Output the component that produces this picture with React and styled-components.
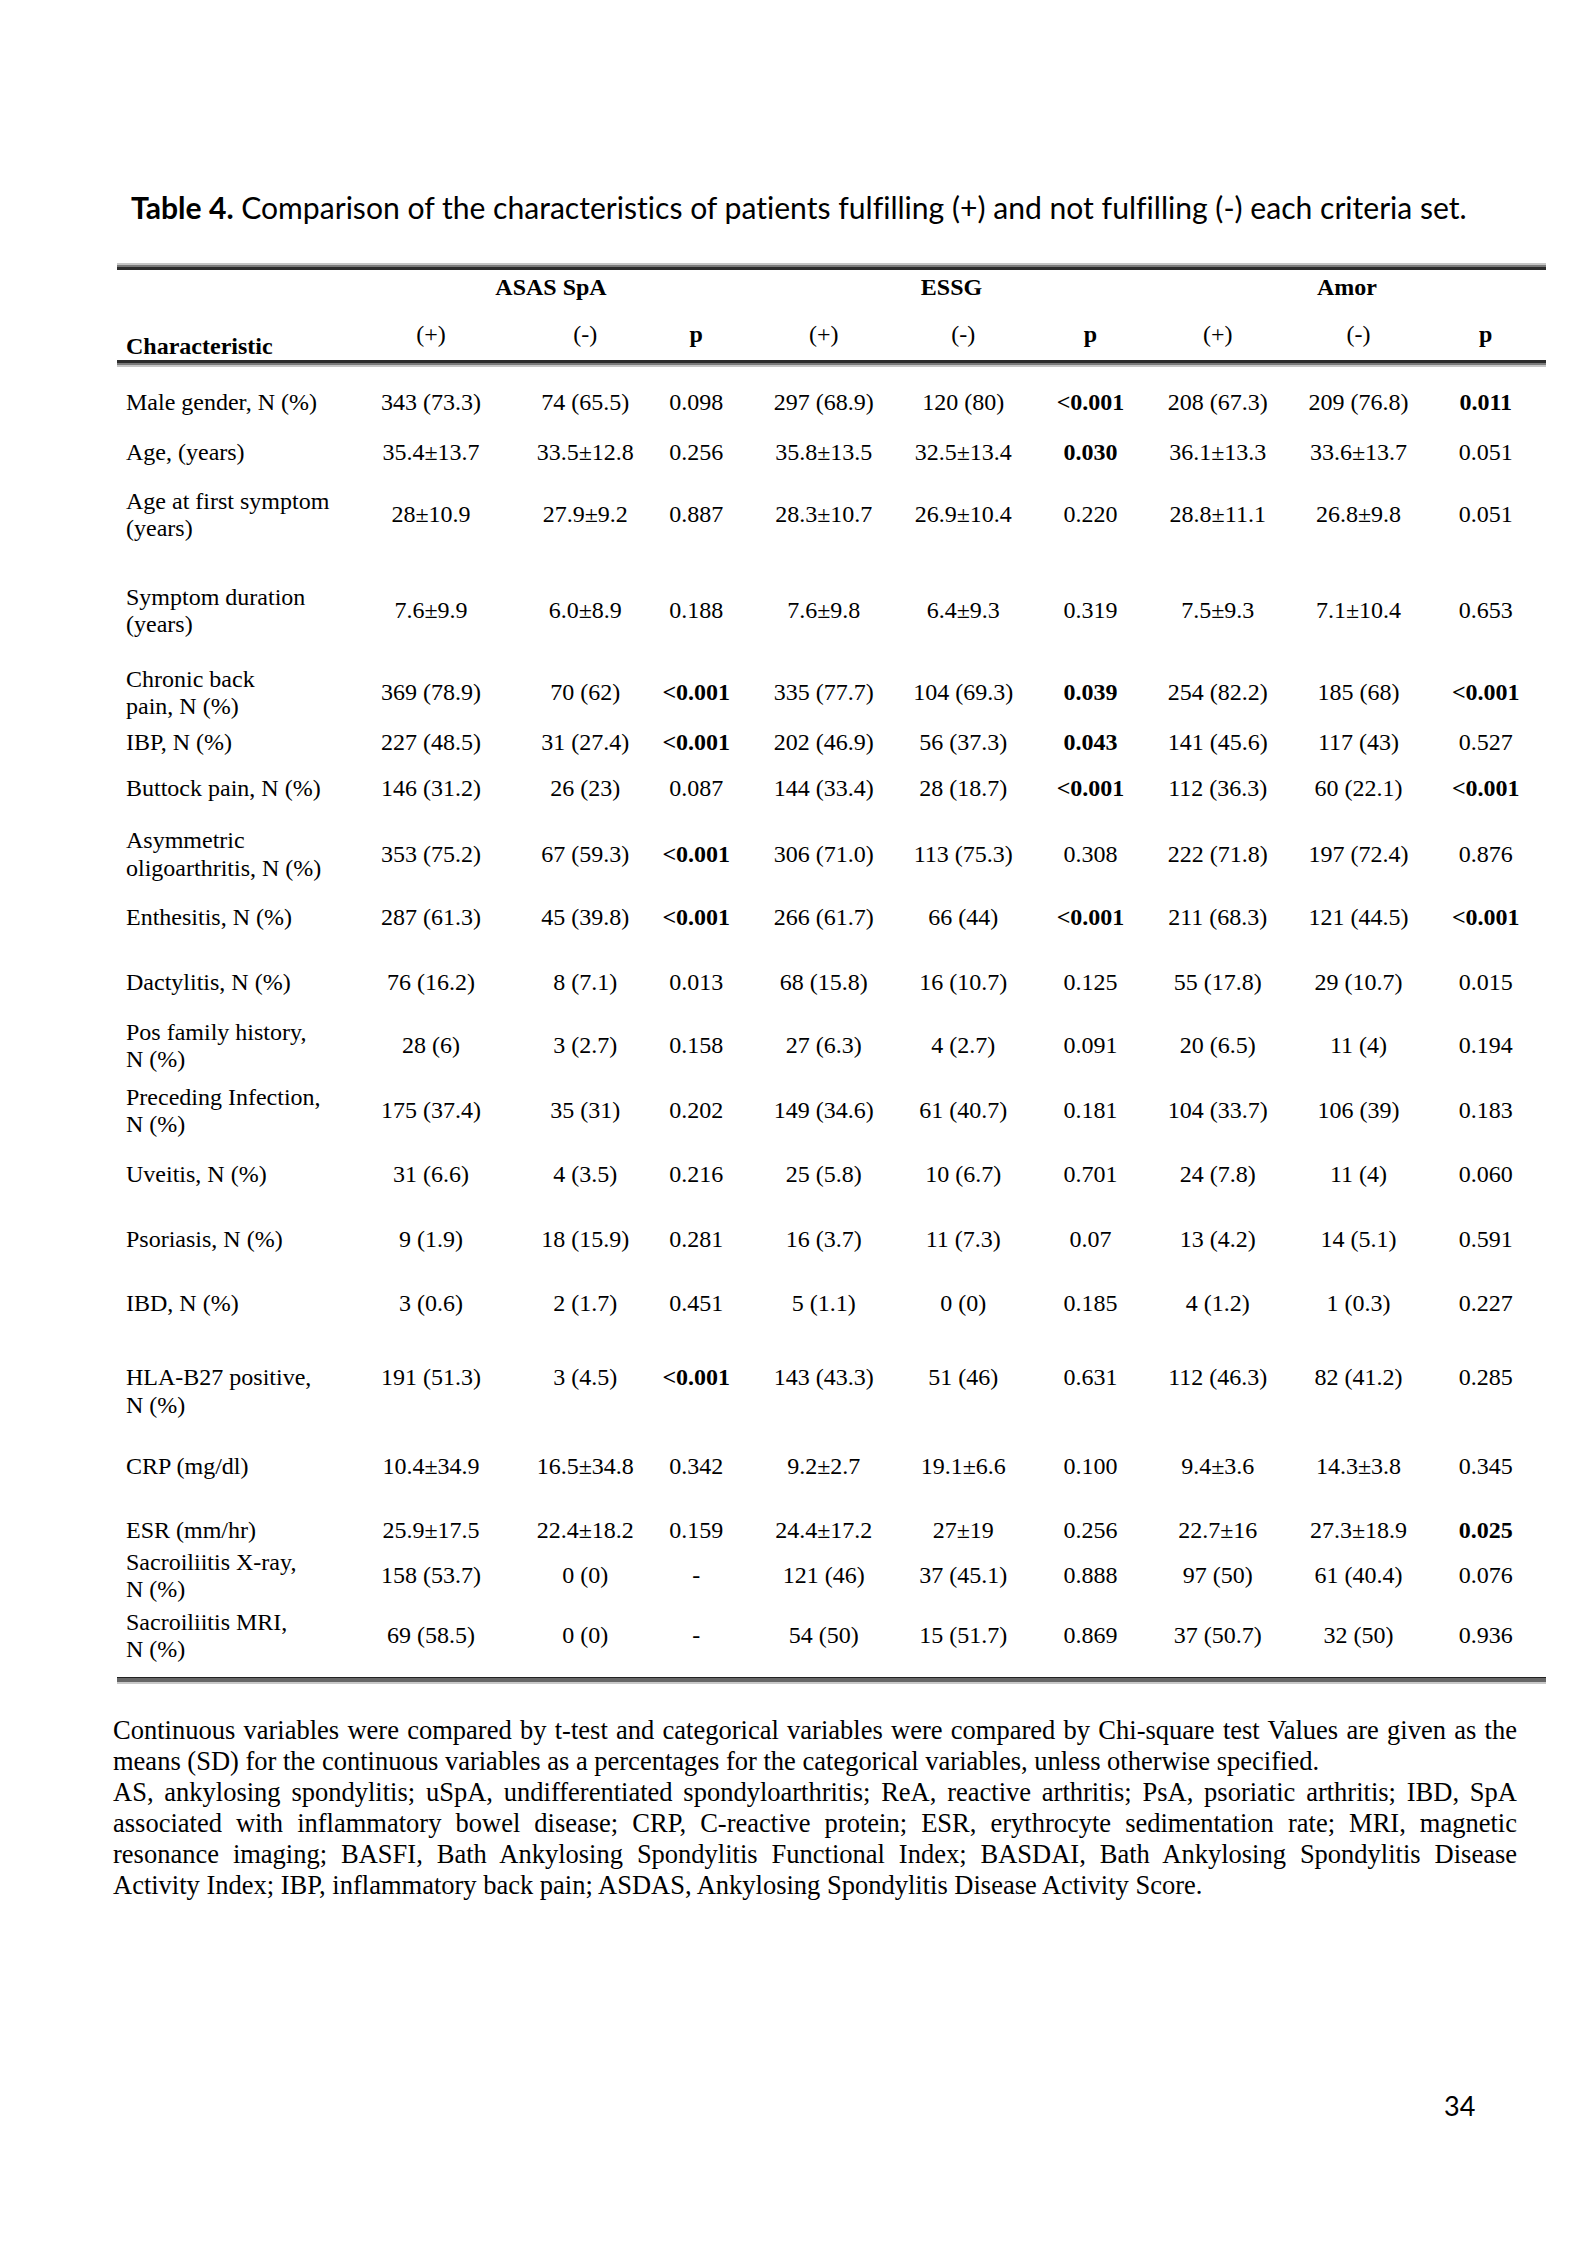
import React from 'react';
import styled, { createGlobalStyle } from 'styled-components';

const GlobalStyle = createGlobalStyle`
  html, body {
    margin: 0;
    padding: 0;
    background: #fff;
  }
  body {
    font-family: "Liberation Serif", "Times New Roman", serif;
    color: #000;
  }
`;

// label column + three criteria groups of (+) / (-) / p
const COLS = '249px 142px 132.5px 119.5px 133.5px 133.5px 127px 133.5px 134px 124.5px';
// small horizontal corrections of each value column (px)
const NUDGE = [-6, 11, -4, -3, 3, 0, -3, 4, 2];

const Page = styled.div`
  width: 1593px;
  height: 2250px;
  padding-top: 191px;
  box-sizing: border-box;
  background: #fff;
`;

const Title = styled.h1`
  margin: 0 0 0 131px;
  font-family: Lato, "Open Sans", sans-serif;
  font-size: 30.1px;
  font-weight: 400;
  line-height: 32px;
  font-variant-ligatures: none;
  color: #000;
  white-space: nowrap;

  b {
    font-weight: 700;
  }
`;

const Table = styled.div`
  margin: 40px 0 0 117px;
  width: 1429px;
  font-size: 24px;
`;

const rules = {
  top: 'linear-gradient(to bottom, #c6c6c6 0 2px, #7a7a7a 2px 4px, #2c2c2c 4px 7px)',
  mid: 'linear-gradient(to bottom, #2c2c2c 0 3px, #7a7a7a 3px 5px, #c6c6c6 5px 7px)',
  bottom: 'linear-gradient(to bottom, #222 0 1px, #666 1px 5px, #c8c8c8 5px 7px)',
};

const Rule = styled.div`
  height: 7px;
  background: ${(p) => rules[p.$variant]};
  margin-top: ${(p) => p.$gap || 0}px;
`;

const GroupRow = styled.div`
  display: grid;
  grid-template-columns: ${COLS};
  height: 34px;
  align-items: center;
`;

const GroupName = styled.div`
  grid-column: span 3;
  text-align: center;
  font-weight: 700;
  line-height: 28px;
  padding-right: ${(p) => p.$shift}px;
`;

const HeadRow = styled.div`
  display: grid;
  grid-template-columns: ${COLS};
  height: 56px;
  align-items: center;
`;

const HeadLabel = styled.div`
  align-self: end;
  padding-left: 9px;
  font-weight: 700;
  line-height: 28px;
`;

const nudge = (n) => `padding-left: ${Math.max(0, 2 * n)}px; padding-right: ${Math.max(0, -2 * n)}px;`;

const HeadCell = styled.div`
  text-align: center;
  padding-top: 4px;
  line-height: 28px;
  font-weight: ${(p) => (p.$bold ? 700 : 400)};
  ${(p) => nudge(p.$nudge)}
`;

const Row = styled.div`
  display: grid;
  grid-template-columns: ${COLS};
  height: ${(p) => p.$h}px;
  align-items: ${(p) => (p.$top ? 'start' : 'center')};
  padding-top: ${(p) => p.$pad || 0}px;
  box-sizing: border-box;
`;

const Label = styled.div`
  padding-left: 9px;
  line-height: 27.5px;
`;

const Cell = styled.div`
  text-align: center;
  line-height: 27.5px;
  white-space: nowrap;
  font-weight: ${(p) => (p.$bold ? 700 : 400)};
  ${(p) => nudge(p.$nudge)}
`;

const Notes = styled.div`
  margin: 31px 0 0 113px;
  width: 1404px;
  font-size: 26.5px;
  line-height: 31px;
  font-variant-ligatures: none;
`;

const NoteLine = styled.div`
  text-align: justify;
  text-align-last: ${(p) => (p.$last ? 'left' : 'justify')};
`;

const PageNumber = styled.div`
  margin: 190px 0 0 1444px;
  font-family: Lato, "Open Sans", sans-serif;
  font-size: 27px;
  line-height: 30px;
`;

// values prefixed with * are printed in bold
const rows = [
  { h: 72, label: ['Male gender, N (%)'], v: ['343 (73.3)', '74 (65.5)', '0.098', '297 (68.9)', '120 (80)', '*<0.001', '208 (67.3)', '209 (76.8)', '*0.011'] },
  { h: 26, label: ['Age, (years)'], v: ['35.4±13.7', '33.5±12.8', '0.256', '35.8±13.5', '32.5±13.4', '*0.030', '36.1±13.3', '33.6±13.7', '0.051'] },
  { h: 100, label: ['Age at first symptom', '(years)'], v: ['28±10.9', '27.9±9.2', '0.887', '28.3±10.7', '26.9±10.4', '0.220', '28.8±11.1', '26.8±9.8', '0.051'] },
  { h: 92, label: ['Symptom duration', '(years)'], v: ['7.6±9.9', '6.0±8.9', '0.188', '7.6±9.8', '6.4±9.3', '0.319', '7.5±9.3', '7.1±10.4', '0.653'] },
  { h: 72, label: ['Chronic back', 'pain, N (%)'], v: ['369 (78.9)', '70 (62)', '*<0.001', '335 (77.7)', '104 (69.3)', '*0.039', '254 (82.2)', '185 (68)', '*<0.001'] },
  { h: 22, label: ['IBP, N (%)'], v: ['227 (48.5)', '31 (27.4)', '*<0.001', '202 (46.9)', '56 (37.3)', '*0.043', '141 (45.6)', '117 (43)', '0.527'] },
  { h: 76, label: ['Buttock pain, N (%)'], v: ['146 (31.2)', '26 (23)', '0.087', '144 (33.4)', '28 (18.7)', '*<0.001', '112 (36.3)', '60 (22.1)', '*<0.001'] },
  { h: 54, label: ['Asymmetric', 'oligoarthritis, N (%)'], v: ['353 (75.2)', '67 (59.3)', '*<0.001', '306 (71.0)', '113 (75.3)', '0.308', '222 (71.8)', '197 (72.4)', '0.876'] },
  { h: 74, label: ['Enthesitis, N (%)'], v: ['287 (61.3)', '45 (39.8)', '*<0.001', '266 (61.7)', '66 (44)', '*<0.001', '211 (68.3)', '121 (44.5)', '*<0.001'] },
  { h: 56, label: ['Dactylitis, N (%)'], v: ['76 (16.2)', '8 (7.1)', '0.013', '68 (15.8)', '16 (10.7)', '0.125', '55 (17.8)', '29 (10.7)', '0.015'] },
  { h: 70, label: ['Pos family history,', 'N (%)'], v: ['28 (6)', '3 (2.7)', '0.158', '27 (6.3)', '4 (2.7)', '0.091', '20 (6.5)', '11 (4)', '0.194'] },
  { h: 60, label: ['Preceding Infection,', 'N (%)'], v: ['175 (37.4)', '35 (31)', '0.202', '149 (34.6)', '61 (40.7)', '0.181', '104 (33.7)', '106 (39)', '0.183'] },
  { h: 68, label: ['Uveitis, N (%)'], v: ['31 (6.6)', '4 (3.5)', '0.216', '25 (5.8)', '10 (6.7)', '0.701', '24 (7.8)', '11 (4)', '0.060'] },
  { h: 62, label: ['Psoriasis, N (%)'], v: ['9 (1.9)', '18 (15.9)', '0.281', '16 (3.7)', '11 (7.3)', '0.07', '13 (4.2)', '14 (5.1)', '0.591'] },
  { h: 66, label: ['IBD, N (%)'], v: ['3 (0.6)', '2 (1.7)', '0.451', '5 (1.1)', '0 (0)', '0.185', '4 (1.2)', '1 (0.3)', '0.227'] },
  { h: 82, top: true, pad: 27, label: ['HLA-B27 positive,', 'N (%)'], v: ['191 (51.3)', '3 (4.5)', '*<0.001', '143 (43.3)', '51 (46)', '0.631', '112 (46.3)', '82 (41.2)', '0.285'] },
  { h: 96, label: ['CRP (mg/dl)'], v: ['10.4±34.9', '16.5±34.8', '0.342', '9.2±2.7', '19.1±6.6', '0.100', '9.4±3.6', '14.3±3.8', '0.345'] },
  { h: 32, label: ['ESR (mm/hr)'], v: ['25.9±17.5', '22.4±18.2', '0.159', '24.4±17.2', '27±19', '0.256', '22.7±16', '27.3±18.9', '*0.025'] },
  { h: 58, label: ['Sacroiliitis X-ray,', 'N (%)'], v: ['158 (53.7)', '0 (0)', '-', '121 (46)', '37 (45.1)', '0.888', '97 (50)', '61 (40.4)', '0.076'] },
  { h: 62, label: ['Sacroiliitis MRI,', 'N (%)'], v: ['69 (58.5)', '0 (0)', '-', '54 (50)', '15 (51.7)', '0.869', '37 (50.7)', '32 (50)', '0.936'] },
];

const groups = [
  { name: 'ASAS SpA', shift: 24 },
  { name: 'ESSG', shift: 11 },
  { name: 'Amor', shift: 6 },
];

const notes = [
  [
    'Continuous variables were compared by t-test and categorical variables were compared by Chi-square test Values are given as the',
    'means (SD) for the continuous variables as a percentages for the categorical variables, unless otherwise specified.',
  ],
  [
    'AS, ankylosing spondylitis; uSpA, undifferentiated spondyloarthritis; ReA, reactive arthritis; PsA, psoriatic arthritis; IBD, SpA',
    'associated with inflammatory bowel disease; CRP, C-reactive protein; ESR, erythrocyte sedimentation rate; MRI, magnetic',
    'resonance imaging; BASFI, Bath Ankylosing Spondylitis Functional Index; BASDAI, Bath Ankylosing Spondylitis Disease',
    'Activity Index; IBP, inflammatory back pain; ASDAS, Ankylosing Spondylitis Disease Activity Score.',
  ],
];

export default function App() {
  return (
    <Page>
      <GlobalStyle />
      <Title>
        <b>Table 4.</b> Comparison of the characteristics of patients fulfilling (+) and not fulfilling (-) each criteria set.
      </Title>

      <Table>
        <Rule $variant="top" />
        <GroupRow>
          <div />
          {groups.map((g) => (
            <GroupName key={g.name} $shift={g.shift}>
              {g.name}
            </GroupName>
          ))}
        </GroupRow>
        <HeadRow>
          <HeadLabel>Characteristic</HeadLabel>
          {groups.map((g, gi) => (
            <React.Fragment key={g.name}>
              <HeadCell $nudge={NUDGE[gi * 3]}>(+)</HeadCell>
              <HeadCell $nudge={NUDGE[gi * 3 + 1]}>(-)</HeadCell>
              <HeadCell $nudge={NUDGE[gi * 3 + 2]} $bold>
                p
              </HeadCell>
            </React.Fragment>
          ))}
        </HeadRow>
        <Rule $variant="mid" />

        {rows.map((r) => (
          <Row key={r.label[0]} $h={r.h} $top={r.top} $pad={r.pad}>
            <Label>
              {r.label.map((l) => (
                <div key={l}>{l}</div>
              ))}
            </Label>
            {r.v.map((val, i) => {
              const bold = val.startsWith('*');
              return (
                <Cell key={i} $bold={bold} $nudge={NUDGE[i]}>
                  {bold ? val.slice(1) : val}
                </Cell>
              );
            })}
          </Row>
        ))}

        <Rule $variant="bottom" $gap={10} />
      </Table>

      <Notes>
        {notes.map((para, pi) =>
          para.map((line, li) => (
            <NoteLine key={`${pi}-${li}`} $last={li === para.length - 1}>
              {line}
            </NoteLine>
          ))
        )}
      </Notes>

      <PageNumber>34</PageNumber>
    </Page>
  );
}
